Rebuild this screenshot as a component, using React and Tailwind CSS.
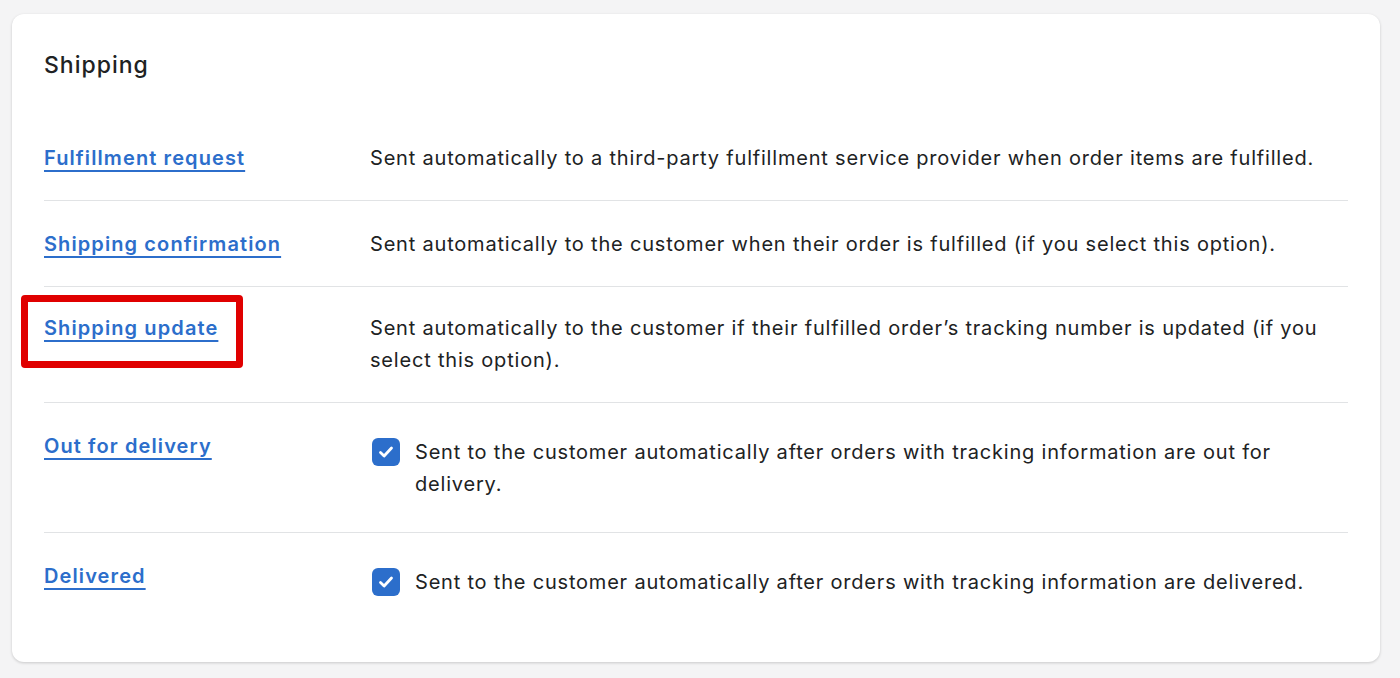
import React from "react";

const rows = [
  {
    title: "Fulfillment request",
    text: "Sent automatically to a third-party fulfillment service provider when order items are fulfilled.",
  },
  {
    title: "Shipping confirmation",
    text: "Sent automatically to the customer when their order is fulfilled (if you select this option).",
  },
  {
    title: "Shipping update",
    text: "Sent automatically to the customer if their fulfilled order’s tracking number is updated (if you select this option).",
    highlight: true,
  },
  {
    title: "Out for delivery",
    text: "Sent to the customer automatically after orders with tracking information are out for delivery.",
    checkbox: true,
  },
  {
    title: "Delivered",
    text: "Sent to the customer automatically after orders with tracking information are delivered.",
    checkbox: true,
  },
];

const Check = () => (
  <span className="mt-[2px] flex h-[28px] w-[28px] shrink-0 items-center justify-center rounded-[6px] bg-[#2c6ecb]">
    <svg width="20" height="20" viewBox="0 0 20 20" fill="none">
      <path
        d="M4.5 10.5l3.6 3.5 7.4-8"
        stroke="white"
        strokeWidth="2.8"
        strokeLinecap="round"
        strokeLinejoin="round"
      />
    </svg>
  </span>
);

export default function App() {
  return (
    <div
      className="min-h-screen bg-[#f4f4f5] pl-[12px] pr-[20px] pt-[14px] pb-[16px] text-[#202223]"
      style={{ fontFamily: "Inter, 'Noto Sans', sans-serif" }}
    >
      <div className="rounded-[12px] bg-white px-[32px] pt-[32px] pb-[31px] shadow-[0_1px_3px_rgba(0,0,0,0.18)]">
        <h2 className="text-[23px] leading-[38px] font-medium tracking-[1px]">Shipping</h2>
        <div className="mt-[31px]">
          {rows.map((r, i) => {
            const last = i === rows.length - 1;
            return (
              <div
                key={r.title}
                className={`flex text-[20px] leading-[32px] tracking-[0.8px] ${
                  last ? "pt-[27px] pb-[27px]" : "border-b border-[#e1e3e5]"
                } ${
                  last ? "" : r.highlight ? "pt-[25px] pb-[26px]" : "pt-[27px] pb-[26px]"
                }`}
              >
                <div className="relative w-[326px] shrink-0">
                  <a
                    href="#"
                    className="font-semibold tracking-[1.1px] text-[#2c6ecb] underline underline-offset-[5px] decoration-[2px]"
                  >
                    {r.title}
                  </a>
                  {r.highlight && (
                    <div className="pointer-events-none absolute left-[-23px] top-[-17px] h-[73px] w-[222px] rounded-[4px] border-[7px] border-[#e00000]" />
                  )}
                </div>
                {r.checkbox ? (
                  <div className="flex flex-1 gap-[15px] py-[6px] pl-[2px]">
                    <Check />
                    <p>{r.text}</p>
                  </div>
                ) : (
                  <p className="flex-1">{r.text}</p>
                )}
              </div>
            );
          })}
        </div>
      </div>
    </div>
  );
}
